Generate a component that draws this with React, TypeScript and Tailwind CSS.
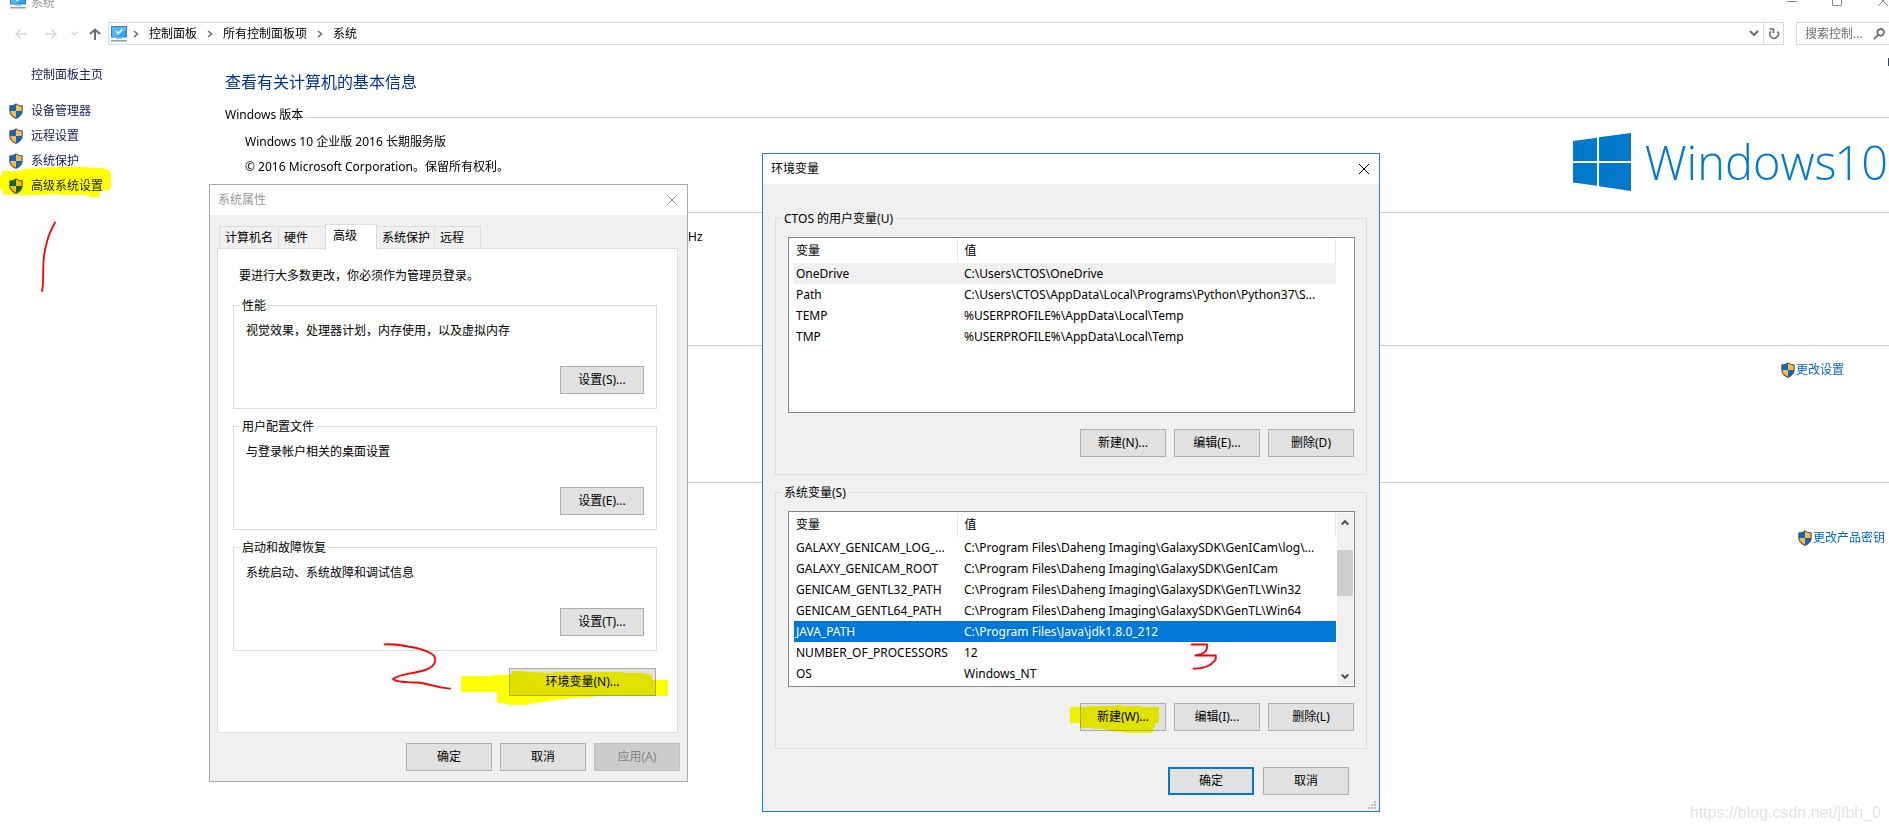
import type { ReactNode } from 'react';

const fieldset = 'relative border border-[#dcdcdc]';

function Shield() {
  return (
    <svg viewBox="0 0 14 16" className="h-4 w-[14px] shrink-0" aria-hidden="true">
      <path d="M7 .2C5.200 1.700 3 2.300.3 2.500V7.500C.3 11.500 3 14.300 7 15.900 11 14.300 13.700 11.500 13.700 7.500V2.500C11 2.300 8.800 1.700 7 .2Z" fill="#4b4f54" />
      <path d="M7 1.600C5.300 2.800 3.500 3.300 1.400 3.500V8H7Z" fill="#0b67c9" />
      <path d="M7 1.600C8.700 2.800 10.500 3.300 12.600 3.500V8H7Z" fill="#fdbd3a" />
      <path d="M1.400 8C1.500 11 3.800 13.400 7 14.700V8Z" fill="#fdbd3a" />
      <path d="M12.600 8C12.500 11 10.200 13.400 7 14.700V8Z" fill="#0b67c9" />
    </svg>
  );
}

function Monitor() {
  return (
    <svg viewBox="0 0 16 16" className="h-4 w-4 shrink-0" aria-hidden="true">
      <rect x="0.500" y="0.500" width="15" height="10.500" fill="#2ea3f2" stroke="#3c7fb1" />
      <path d="M1 1H15V4L6 10.500H1Z" fill="#4db8fb" />
      <path d="M5.200 5.200 7.500 7.400 11.500 3" fill="none" stroke="#fff" strokeWidth="1.500" />
      <rect x="5" y="12" width="6" height="1" fill="#9db7c9" />
      <rect x="0" y="14" width="16" height="1.500" fill="#7fa6bf" />
    </svg>
  );
}

function Cross({ className }: { className: string }) {
  return (
    <svg viewBox="0 0 12 12" className={className} fill="none" stroke="currentColor" aria-hidden="true">
      <path d="M1 1 11 11M11 1 1 11" />
    </svg>
  );
}

function Crumb() {
  return (
    <svg viewBox="0 0 6 8" className="h-2 w-[6px] shrink-0" fill="none" stroke="#6b6b6b" strokeWidth="1.500" aria-hidden="true">
      <path d="M1 1 4.500 4 1 7" />
    </svg>
  );
}

function Btn({ children, className = 'w-[86px] border-[#adadad] bg-[#e1e1e1]', disabled = false }: { children: ReactNode; className?: string; disabled?: boolean }) {
  return (
    <button type="button" disabled={disabled} className={`h-7 shrink-0 border text-center leading-4 ${className}`}>
      {children}
    </button>
  );
}

function Ink({ box, path, className }: { box: string; path: string; className: string }) {
  return (
    <svg viewBox={box} className={`pointer-events-none absolute ${className}`} fill="none" stroke="#fe0000" strokeWidth="1.800" strokeLinecap="round" strokeLinejoin="round" aria-hidden="true">
      <path d={path} />
    </svg>
  );
}

function Marker({ box, points, className }: { box: string; points: string; className: string }) {
  return (
    <svg viewBox={box} className={`pointer-events-none absolute mix-blend-multiply ${className}`} aria-hidden="true">
      <polygon points={points} fill="#ffff00" />
    </svg>
  );
}

const sideLinks = ['设备管理器', '远程设置', '系统保护', '高级系统设置'];

function Sidebar() {
  return (
    <nav className="relative w-[225px] shrink-0 pt-[22px] text-[#151c55]">
      <a href="#home" className="block pl-[31px] leading-4">控制面板主页</a>
      <ul className="mt-[15px]">
        {sideLinks.map((label) => (
          <li key={label} className="h-[25px] pl-[9px]">
            <a href="#task" className="flex h-[25px] items-center gap-2">
              <Shield />
              {label}
            </a>
          </li>
        ))}
      </ul>
      <Marker
        className="left-0 top-[120px] h-[34px] w-[114px]"
        box="0 165 114 34"
        points="2,171 21,171 24,169 65,167 87,167 88,168 103,168 110,171 111,174 111,189 108,190 100,191 100,197 89,197 89,195 60,195 58,194 38,195 4,195 2,190 0,188 0,176 2,175"
      />
      <Ink className="left-10 top-[175px] h-[75px] w-5" box="40 220 20 75" path="M55 222.500C51 230 49 234 47.500 240 45 248 44.300 252 43.800 258 43 266 43.200 276 42.800 286L42 291" />
    </nav>
  );
}

function AddressBar() {
  return (
    <div className="flex h-[23px] items-stretch">
      <div className="flex w-[108px] shrink-0 items-center pl-[15px]">
        <svg viewBox="0 0 12 10" className="h-[10px] w-3" fill="none" stroke="#d5d5d5" strokeWidth="1.500" aria-hidden="true">
          <path d="M5.500.5 1 5 5.500 9.500M1 5H12" />
        </svg>
        <svg viewBox="0 0 12 10" className="ml-[18px] h-[10px] w-3" fill="none" stroke="#d5d5d5" strokeWidth="1.500" aria-hidden="true">
          <path d="M6.500.5 11 5 6.500 9.500M11 5H0" />
        </svg>
        <svg viewBox="0 0 7 5" className="ml-[14px] h-[5px] w-[7px]" fill="none" stroke="#d5d5d5" strokeWidth="1.500" aria-hidden="true">
          <path d="M.5.8 3.500 3.800 6.500.8" />
        </svg>
        <svg viewBox="0 0 12 12" className="ml-[11px] h-3 w-3" fill="none" stroke="#6d6d6d" strokeWidth="2" aria-hidden="true">
          <path d="M1 6 6 1.500 11 6M6 1.500V12" />
        </svg>
      </div>
      <div className="flex grow items-center border border-[#d9d9d9] pl-[2px]">
        <Monitor />
        <div className="flex grow items-center gap-[10px] pl-[6px] text-black">
          <Crumb />
          <span>控制面板</span>
          <Crumb />
          <span>所有控制面板项</span>
          <Crumb />
          <span>系统</span>
        </div>
        <svg viewBox="0 0 10 7" className="mr-1 h-[7px] w-[10px]" fill="none" stroke="#6d6d6d" strokeWidth="2" aria-hidden="true">
          <path d="M1 1 5 5 9 1" />
        </svg>
        <button type="button" aria-label="刷新" className="flex h-full w-5 items-center justify-center border-l border-[#d9d9d9]">
          <svg viewBox="0 0 12 12" className="h-3 w-3" fill="none" stroke="#6d6d6d" strokeWidth="1.600" aria-hidden="true">
            <path d="M3 3.200A4.200 4.200 0 1 0 9.500 3.500M1.500 1H5.500V5.200" />
          </svg>
        </button>
      </div>
      <div className="ml-3 flex w-[93px] shrink-0 items-center border border-r-0 border-[#d9d9d9] pl-2">
        <input aria-label="搜索" placeholder="搜索控制..." className="w-[60px] bg-transparent outline-none placeholder:text-[#6d6d6d]" />
        <svg viewBox="0 0 12 12" className="ml-2 h-3 w-3 shrink-0" fill="none" stroke="#6d6d6d" strokeWidth="1.800" aria-hidden="true">
          <circle cx="7.700" cy="4.300" r="3.300" />
          <path d="M5.200 6.800.8 11.200" />
        </svg>
      </div>
    </div>
  );
}

function Content() {
  return (
    <main className="relative grow">
      <svg viewBox="0 0 1 8" className="absolute right-0 top-[13px] h-2 w-px" fill="#1f4a7c" aria-hidden="true">
        <rect width="1" height="8" />
      </svg>
      <h1 className="mt-[25px] text-base leading-6 text-[#003399]">查看有关计算机的基本信息</h1>
      <section className="h-[118px]">
        <div className="flex items-center gap-[2px] pt-[13px]">
          <h2 className="leading-4">Windows 版本</h2>
          <hr className="mt-1 grow border-[#cccccc]" />
        </div>
        <div className="flex justify-between pl-5 pr-px">
          <div className="pt-[6px] leading-[25px]">
            <p>Windows 10 企业版 2016 长期服务版</p>
            <p>© 2016 Microsoft Corporation。保留所有权利。</p>
          </div>
          <div className="flex items-start gap-[14px] pt-[10px] text-[#0078cc]">
            <svg viewBox="0 0 58 58" className="h-[58px] w-[58px]" fill="currentColor" aria-hidden="true">
              <path d="M0 8 24 4.700V28H0ZM26 4.300 58 0V28H26ZM0 30H24V52.800L0 49.500ZM26 30H58V58L26 53.300Z" />
            </svg>
            <div className="flex font-['Open_Sans',sans-serif] text-[47px] font-light leading-[58px]">
              <span>Windows</span>
              <span className="-ml-[2px]">10</span>
            </div>
          </div>
        </div>
      </section>
      <section className="-ml-4 h-[133px] border-t border-[#cccccc] pt-4">
        <p className="pl-[479px] leading-4">Hz</p>
      </section>
      <section className="-ml-4 flex h-[137px] justify-end border-t border-[#cccccc] pr-[45px] pt-4 text-[#0066cc]">
        <a href="#change" className="flex h-4 items-center gap-px"><Shield />更改设置</a>
      </section>
      <section className="-ml-4 flex justify-end border-t border-[#cccccc] pr-1 pt-[47px] text-[#0066cc]">
        <a href="#key" className="flex h-4 items-center gap-px"><Shield />更改产品密钥</a>
      </section>
    </main>
  );
}

const groups = [
  { title: '性能', text: '视觉效果，处理器计划，内存使用，以及虚拟内存', button: '设置(S)...' },
  { title: '用户配置文件', text: '与登录帐户相关的桌面设置', button: '设置(E)...' },
  { title: '启动和故障恢复', text: '系统启动、系统故障和调试信息', button: '设置(T)...' },
];

const tab = 'h-[23px] border border-[#dcdcdc] pl-[5px] text-left leading-4';

function SystemProperties() {
  return (
    <div role="dialog" aria-label="系统属性" className="absolute left-[209px] top-[184px] w-[479px] border border-[#aaaaaa] bg-[#f0f0f0] text-black">
      <div className="flex h-[30px] items-center justify-between bg-white pl-2 pr-[9px] text-[#999999]">
        <span>系统属性</span>
        <button type="button" aria-label="关闭"><Cross className="h-3 w-3" /></button>
      </div>
      <div role="tablist" className="flex items-end pl-[9px] pt-[9px]">
        <button type="button" role="tab" className={`${tab} w-[60px]`}>计算机名</button>
        <button type="button" role="tab" className={`${tab} -ml-px w-[48px]`}>硬件</button>
        <button type="button" role="tab" aria-selected="true" className="relative z-10 -mb-px -ml-px h-[26px] w-[52px] border border-b-0 border-[#dcdcdc] bg-white pb-[3px] pl-[7px] text-left leading-4">高级</button>
        <button type="button" role="tab" className={`${tab} -ml-px w-[59px]`}>系统保护</button>
        <button type="button" role="tab" className={`${tab} -ml-px w-[47px]`}>远程</button>
      </div>
      <div role="tabpanel" className="-mt-px ml-[7px] mr-[9px] flex flex-col border border-[#dcdcdc] bg-white pb-9 pl-[15px] pr-5 pt-[19px]">
        <p className="pl-[6px] leading-4">要进行大多数更改，你必须作为管理员登录。</p>
        <div className="mt-[21px] flex flex-col gap-[17px]">
          {groups.map((g) => (
            <section key={g.title} className={`${fieldset} flex h-[104px] flex-col justify-between pb-[14px] pl-3 pr-3`}>
              <h3 className="absolute -top-2 left-[6px] bg-white px-[2px] leading-4">{g.title}</h3>
              <p className="pt-[17px] leading-4">{g.text}</p>
              <Btn className="w-[84px] self-end border-[#adadad] bg-[#e1e1e1]">{g.button}</Btn>
            </section>
          ))}
        </div>
        <div className="mt-[17px] flex justify-end pr-px">
          <Btn className="w-[147px] border-[#adadad] bg-[#e1e1e1]">环境变量(N)...</Btn>
        </div>
      </div>
      <div className="flex justify-end gap-2 pb-[10px] pr-[7px] pt-[10px]">
        <Btn>确定</Btn>
        <Btn>取消</Btn>
        <Btn disabled className="w-[86px] border-[#bfbfbf] bg-[#cccccc] text-[#838383]">应用(A)</Btn>
      </div>
      <Marker
        className="left-[250px] top-[483px] h-10 w-[210px]"
        box="460 668 210 40"
        points="461,676 492,676 492,675 510,675 513,671 520,671 528,672 553,673 554,672 623,672 624,673 641,673 647,674 652,675 652,680 668,680 668,696 595,696 595,697 573,698 555,700 542,702 528,704 528,705 509,705 503,703 497,703 497,692 461,692"
      />
      <Ink className="left-[170px] top-[455px] h-[55px] w-[75px]" box="380 640 75 55" path="M384.500 644.300C393 644 401 645 408 646.500 418 648 427 651 431 653.500 436 656 435.500 659 434.500 663.500 432 668 424 671 415 672.500 408 674 398 675 393 679 397 683 408 682 417 682.500 426 683 438 688 450 688.600" />
    </div>
  );
}

type Row = [string, string];

const userRows: Row[] = [
  ['OneDrive', 'C:\\Users\\CTOS\\OneDrive'],
  ['Path', 'C:\\Users\\CTOS\\AppData\\Local\\Programs\\Python\\Python37\\S...'],
  ['TEMP', '%USERPROFILE%\\AppData\\Local\\Temp'],
  ['TMP', '%USERPROFILE%\\AppData\\Local\\Temp'],
];

const systemRows: Row[] = [
  ['GALAXY_GENICAM_LOG_...', 'C:\\Program Files\\Daheng Imaging\\GalaxySDK\\GenICam\\log\\...'],
  ['GALAXY_GENICAM_ROOT', 'C:\\Program Files\\Daheng Imaging\\GalaxySDK\\GenICam'],
  ['GENICAM_GENTL32_PATH', 'C:\\Program Files\\Daheng Imaging\\GalaxySDK\\GenTL\\Win32'],
  ['GENICAM_GENTL64_PATH', 'C:\\Program Files\\Daheng Imaging\\GalaxySDK\\GenTL\\Win64'],
  ['JAVA_PATH', 'C:\\Program Files\\Java\\jdk1.8.0_212'],
  ['NUMBER_OF_PROCESSORS', '12'],
  ['OS', 'Windows_NT'],
];

function VariableGroup({ title, rows, active, activeClass, buttons, scroll = false }: { title: string; rows: Row[]; active: number; activeClass: string; buttons: string[]; scroll?: boolean }) {
  return (
    <section className={`${fieldset} pb-[17px] pl-3 pr-[11px] pt-[18px]`}>
      <h3 className="absolute -top-2 left-[6px] bg-[#f0f0f0] px-[2px] leading-4">{title}</h3>
      <div className="flex h-[176px] items-start border border-[#828790] bg-white py-px pl-[5px] pr-px">
        <table className="w-[542px] table-fixed border-collapse whitespace-nowrap text-left">
          <thead>
            <tr className="h-6">
              <th className="w-[163px] border-r border-[#e5e5e5] p-0 pl-[2px] font-normal leading-4">变量</th>
              <th className="border-r border-[#e5e5e5] p-0 pl-[7px] font-normal leading-4">值</th>
            </tr>
          </thead>
          <tbody>
            {rows.map(([name, value], i) => (
              <tr key={name} className={`h-[21px] ${i === active ? activeClass : ''}`}>
                <td className="p-0 pl-[2px] leading-4">{name}</td>
                <td className="p-0 pl-[7px] leading-4">{value}</td>
              </tr>
            ))}
          </tbody>
        </table>
        {scroll && (
          <div className="ml-px flex h-full w-4 flex-col items-center bg-[#f0f0f0] text-[#505050]">
            <svg viewBox="0 0 8 7" className="mt-[6px] h-[7px] w-2" fill="none" stroke="currentColor" strokeWidth="2" aria-hidden="true"><path d="M.7 5.500 4 2.200 7.300 5.500" /></svg>
            <div className="mt-6 h-[46px] w-full bg-[#cdcdcd]" />
            <svg viewBox="0 0 8 7" className="mb-[5px] mt-auto h-[7px] w-2" fill="none" stroke="currentColor" strokeWidth="2" aria-hidden="true"><path d="M.7 1.500 4 4.800 7.300 1.500" /></svg>
          </div>
        )}
      </div>
      <div className="mt-4 flex justify-end gap-2 pr-px">
        {buttons.map((label) => <Btn key={label}>{label}</Btn>)}
      </div>
    </section>
  );
}

function EnvironmentVariables() {
  return (
    <div role="dialog" aria-label="环境变量" className="absolute left-[762px] top-[153px] w-[618px] border border-[#1883d7] bg-[#f0f0f0] text-black">
      <div className="flex h-[30px] items-center justify-between bg-white pl-2 pr-[9px]">
        <span>环境变量</span>
        <button type="button" aria-label="关闭"><Cross className="h-3 w-3" /></button>
      </div>
      <div className="flex flex-col gap-[17px] px-3 pt-[34px]">
        <VariableGroup title="CTOS 的用户变量(U)" rows={userRows} active={0} activeClass="bg-[#f0f0f0]" buttons={['新建(N)...', '编辑(E)...', '删除(D)']} />
        <VariableGroup title="系统变量(S)" rows={systemRows} active={4} activeClass="bg-[#0078d7] text-white" buttons={['新建(W)...', '编辑(I)...', '删除(L)']} scroll />
      </div>
      <div className="flex justify-end gap-[9px] pb-4 pr-[30px] pt-[18px]">
        <Btn className="w-[86px] border-2 border-[#0078d7] bg-[#e1e1e1]">确定</Btn>
        <Btn>取消</Btn>
      </div>
      <svg viewBox="0 0 8 8" className="absolute bottom-[2px] right-[3px] h-2 w-2" fill="#bfbfbf" aria-hidden="true">
        <path d="M6 0H8V2H6ZM3 3H5V5H3ZM6 3H8V5H6ZM0 6H2V8H0ZM3 6H5V8H3ZM6 6H8V8H6Z" />
      </svg>
      <Marker
        className="left-[305px] top-[549px] h-[34px] w-[94px]"
        box="1068 703 94 34"
        points="1070,707 1089,707 1089,706 1116,706 1116,705 1122,705 1122,706 1141,706 1141,707 1159,707 1159,723 1155,723 1155,728 1153,728 1153,732 1151,733 1125,733 1125,732 1111,731 1104,729 1093,729 1093,728 1080,728 1080,723 1070,723"
      />
      <Ink className="left-[425px] top-[486px] h-8 w-8" box="1188 640 32 32" path="M1191.500 644.500H1207V648C1207 652 1203 654 1195.500 655.500H1215.800V659C1212 665 1206 669 1193.500 668.600" />
    </div>
  );
}

export default function App() {
  return (
    <div className="relative flex min-h-screen flex-col overflow-hidden bg-white font-['Noto_Sans','Noto_Sans_CJK_SC',sans-serif] text-xs text-black">
      <header className="flex h-[22px] items-start justify-between overflow-hidden pl-[10px] text-[#999999]">
        <div className="-mt-[7px] flex gap-[5px]">
          <Monitor />
          <span className="leading-5">系统</span>
        </div>
        <svg viewBox="0 0 103 8" className="h-2 w-[103px]" fill="none" stroke="#8c8c8c" aria-hidden="true">
          <path d="M1 1.500H11M46.500-3H55.500V5.500H46.500ZM92-4 102 6M102-4 92 6" />
        </svg>
      </header>
      <AddressBar />
      <div className="flex grow">
        <Sidebar />
        <Content />
      </div>
      <footer className="flex justify-end pb-[6px] pr-2 font-['Liberation_Sans',sans-serif] text-base leading-6 text-[#e2e2e2]">
        https://blog.csdn.net/jfbh_0
      </footer>
      <SystemProperties />
      <EnvironmentVariables />
    </div>
  );
}
